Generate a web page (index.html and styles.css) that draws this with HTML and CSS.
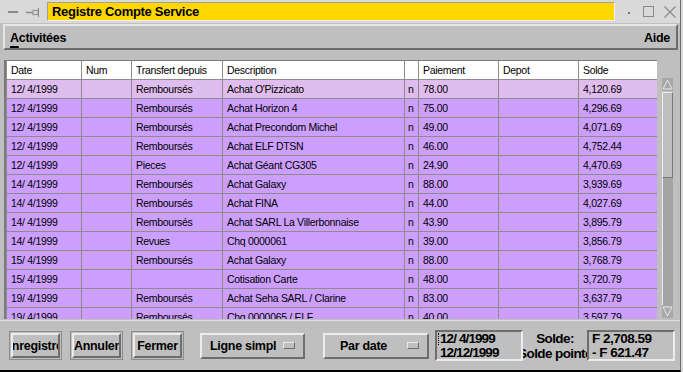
FILE: index.html
```html
<!DOCTYPE html>
<html lang="fr">
<head>
    <meta charset="UTF-8">
    <title>Registre Compte Service</title>
    <link rel="stylesheet" href="styles.css">
</head>
<body>
    <div class="window">
        <div class="titlebar">
            <span class="tb-minus"></span>
            <svg class="tb-pin" width="15" height="10" viewBox="0 0 15 10">
                <path d="M0 5.5H7" stroke="#8a8a8a" stroke-width="1.5"/>
                <path d="M7 2.5V8.5M8 3.5H12V7.5H8" fill="none" stroke="#8a8a8a" stroke-width="1"/>
                <path d="M12.5 1V10" stroke="#8a8a8a" stroke-width="1"/>
            </svg>
            <div class="title-field">Registre Compte Service</div>
            <span class="tb-dot"></span>
            <span class="tb-max"></span>
            <svg class="tb-close" width="12" height="12" viewBox="0 0 12 12">
                <path d="M0.5 0.5L11.5 11.5M11.5 0.5L0.5 11.5" stroke="#8a8a8a" stroke-width="1.2"/>
            </svg>
        </div>

        <div class="menubar">
            <span class="menu-item"><u>A</u>ctivitées</span>
            <span class="menu-item">Aide</span>
        </div>

        <div class="content">
            <div class="register">
                <div class="grid">
                    <table class="ledger">
                        <colgroup>
                            <col class="c-date"><col class="c-num"><col class="c-from"><col class="c-desc">
                            <col class="c-flag"><col class="c-pay"><col class="c-dep"><col class="c-bal">
                        </colgroup>
                        <thead>
                            <tr><th>Date</th><th>Num</th><th>Transfert depuis</th><th>Description</th><th></th><th>Paiement</th><th>Depot</th><th>Solde</th></tr>
                        </thead>
                        <tbody id="rows"></tbody>
                    </table>
                </div>
                <div class="scrollbar">
                    <div class="sb-arrow sb-up"><svg width="11" height="11" viewBox="0 0 11 11"><path d="M5.5 1L1 10H10Z" fill="none" stroke="#e8e8e8"/></svg></div>
                    <div class="sb-slider"></div>
                    <div class="sb-trough"></div>
                    <div class="sb-arrow sb-down"><svg width="11" height="11" viewBox="0 0 11 11"><path d="M5.5 10L1 1H10Z" fill="none" stroke="#e8e8e8"/></svg></div>
                </div>
            </div>
        </div>

        <div class="toolbar">
            <div class="btn-frame"><div class="btn"><span>Enregistrer</span></div></div>
            <div class="btn-frame"><div class="btn"><span>Annuler</span></div></div>
            <div class="btn-frame"><div class="btn"><span>Fermer</span></div></div>
            <div class="optmenu opt-style">Ligne simpl<span class="opt-ind"></span></div>
            <div class="optmenu opt-sort">Par date<span class="opt-ind"></span></div>
            <div class="field dates">
                <span class="cursor"></span>
                <div>12/ 4/1999</div>
                <div>12/12/1999</div>
            </div>
            <div class="labels">
                <div><span>Solde:</span></div>
                <div><span>Solde pointé</span></div>
            </div>
            <div class="field amounts">
                <div>F 2,708.59</div>
                <div>- F 621.47</div>
            </div>
        </div>
    </div>

    <script src="app.js"></script>
</body>
</html>
```

FILE: app.js
```js
const entries = [
    { date: '12/ 4/1999', from: 'Remboursés', desc: "Achat O'Pizzicato", pay: '78.00', bal: '4,120.69' },
    { date: '12/ 4/1999', from: 'Remboursés', desc: 'Achat Horizon 4', pay: '75.00', bal: '4,296.69' },
    { date: '12/ 4/1999', from: 'Remboursés', desc: 'Achat Precondom Michel', pay: '49.00', bal: '4,071.69' },
    { date: '12/ 4/1999', from: 'Remboursés', desc: 'Achat ELF DTSN', pay: '46.00', bal: '4,752.44' },
    { date: '12/ 4/1999', from: 'Pieces', desc: 'Achat Géant CG305', pay: '24.90', bal: '4,470.69' },
    { date: '14/ 4/1999', from: 'Remboursés', desc: 'Achat Galaxy', pay: '88.00', bal: '3,939.69' },
    { date: '14/ 4/1999', from: 'Remboursés', desc: 'Achat FINA', pay: '44.00', bal: '4,027.69' },
    { date: '14/ 4/1999', from: 'Remboursés', desc: 'Achat SARL La Villerbonnaise', pay: '43.90', bal: '3,895.79' },
    { date: '14/ 4/1999', from: 'Revues', desc: 'Chq 0000061', pay: '39.00', bal: '3,856.79' },
    { date: '15/ 4/1999', from: 'Remboursés', desc: 'Achat Galaxy', pay: '88.00', bal: '3,768.79' },
    { date: '15/ 4/1999', from: '', desc: 'Cotisation Carte', pay: '48.00', bal: '3,720.79' },
    { date: '19/ 4/1999', from: 'Remboursés', desc: 'Achat Seha SARL / Clarine', pay: '83.00', bal: '3,637.79' },
    { date: '19/ 4/1999', from: 'Remboursés', desc: 'Chq 0000065 / ELF', pay: '40.00', bal: '3,597.79' }
];

const tbody = document.getElementById('rows');

entries.forEach((e, i) => {
    const tr = document.createElement('tr');
    if (i === 0) tr.className = 'current';
    const cells = [e.date, '', e.from, e.desc, 'n', e.pay, '', e.bal];
    cells.forEach((text, k) => {
        const td = document.createElement('td');
        td.textContent = text;
        if (k === 4) td.className = 'flag';
        tr.appendChild(td);
    });
    tbody.appendChild(tr);
});
```

FILE: styles.css
```css
body {
    margin: 0;
    background: #d9d9d9;
    font-family: "Liberation Sans", Arial, sans-serif;
    color: #000;
}
.window {
    width: 680px;
    height: 370px;
    border-right: 1px solid #6e6e6e;
    border-bottom: 2px solid #000;
    background: #bfbfbf;
    overflow: hidden;
}

/* title bar */
.titlebar {
    height: 23px;
    display: flex;
    align-items: center;
    background: #d9d9d9;
}
.tb-minus {
    width: 10px;
    height: 2px;
    margin-left: 8px;
    background: #8a8a8a;
}
.tb-pin {
    margin-left: 8px;
}
.title-field {
    margin-left: 6px;
    width: 562px;
    height: 17px;
    line-height: 17px;
    padding-left: 4px;
    background: #ffd700;
    border: 1px solid;
    border-color: #a0a0a0 #f4f4f4 #f4f4f4 #a0a0a0;
    font-weight: bold;
    font-size: 13px;
    letter-spacing: -0.3px;
}
.tb-dot {
    width: 2px;
    height: 2px;
    margin-left: 13px;
    margin-top: 2px;
    background: #707070;
}
.tb-max {
    width: 9px;
    height: 9px;
    margin-left: 13px;
    border: 1px solid #8a8a8a;
}
.tb-close {
    margin-left: 10px;
}

/* menu bar */
.menubar {
    height: 22px;
    margin: 1px 2px 0 3px;
    display: flex;
    justify-content: space-between;
    align-items: center;
    padding: 0 6px 0 5px;
    background: #bfbfbf;
    border: 2px solid;
    border-color: #e6e6e6 #6e6e6e #6e6e6e #e6e6e6;
}
.menu-item {
    font-weight: bold;
    font-size: 12.5px;
    letter-spacing: -0.3px;
    margin-top: 1px;
}
.menu-item u {
    text-decoration-thickness: 2px;
    text-underline-offset: 4px;
}

/* register */
.content {
    padding: 10px 0 0 4px;
}
.register {
    height: 260px;
    display: flex;
}
.grid {
    width: 652px;
    height: 258px;
    overflow: hidden;
    border-left: 2px solid #7a7a7a;
    border-top: 1px solid #7a7a7a;
    background: #bfbfbf;
}
.ledger {
    border-collapse: collapse;
    table-layout: fixed;
    width: 652px;
    font-size: 10.5px;
    letter-spacing: -0.3px;
}
.c-date { width: 75px; }
.c-num { width: 50px; }
.c-from { width: 91px; }
.c-desc { width: 182px; }
.c-flag { width: 14px; }
.c-pay { width: 80px; }
.c-dep { width: 80px; }
.c-bal { width: 80px; }
.ledger th,
.ledger td {
    height: 18px;
    padding: 0 0 0 4px;
    border: 1px solid #8c8c8c;
    text-align: left;
    font-weight: normal;
    white-space: pre;
    overflow: hidden;
}
.ledger th {
    background: #fff;
    border-top: none;
}
.ledger td {
    background: #cc9fff;
}
.ledger tr.current td {
    background: #dfbdee;
}
.ledger td.flag {
    padding-left: 3px;
}

/* scrollbar */
.scrollbar {
    width: 18px;
    margin-left: 2px;
    display: flex;
    flex-direction: column;
    padding: 18px 0 2px 3px;
    background: #bfbfbf;
}
.sb-arrow {
    width: 11px;
    height: 13px;
    display: flex;
    align-items: center;
    justify-content: center;
    background: #a8a8a8;
}
.sb-slider {
    width: 9px;
    height: 84px;
    margin-top: 1px;
    background: #bfbfbf;
    border: 1px solid;
    border-color: #ececec #7a7a7a #7a7a7a #ececec;
}
.sb-trough {
    flex: 1;
    width: 11px;
    background: #a3a3a3;
    border-left: 1px solid #ececec;
    box-sizing: border-box;
}

/* bottom bar */
.toolbar {
    height: 49px;
    border-top: 1px solid #e0e0e0;
    display: flex;
    align-items: center;
    padding: 0 0 2px 9px;
    font-weight: bold;
}
.btn-frame {
    width: 49px;
    height: 25px;
    margin-right: 8px;
    padding: 1px;
    border: 1px solid #8c8c8c;
}
.btn-frame:nth-child(3) {
    margin-right: 16px;
}
.btn {
    height: 25px;
    display: flex;
    justify-content: center;
    align-items: center;
    overflow: hidden;
    border: 2px solid;
    border-color: #ececec #6e6e6e #6e6e6e #ececec;
    font-size: 12.5px;
    letter-spacing: -0.3px;
    box-sizing: border-box;
}
.btn span {
    flex: none;
}
.optmenu {
    height: 26px;
    display: flex;
    align-items: center;
    box-sizing: border-box;
    border: 2px solid;
    border-color: #ececec #6e6e6e #6e6e6e #ececec;
    font-size: 12.5px;
    letter-spacing: -0.3px;
}
.opt-style {
    width: 105px;
    padding-left: 8px;
    margin-right: 18px;
}
.opt-sort {
    width: 106px;
    padding-left: 15px;
    margin-right: 6px;
}
.opt-ind {
    width: 10px;
    height: 5px;
    margin-left: auto;
    margin-right: 8px;
    border: 1px solid;
    border-color: #ececec #6e6e6e #6e6e6e #ececec;
}
.field {
    width: 88px;
    height: 31px;
    box-sizing: border-box;
    border: 2px solid;
    border-color: #6e6e6e #ececec #ececec #6e6e6e;
    padding: 0 0 0 3px;
    font-size: 13.5px;
    line-height: 14px;
    display: flex;
    flex-direction: column;
    justify-content: center;
}
.dates {
    position: relative;
    letter-spacing: -0.9px;
}
.cursor {
    position: absolute;
    left: 1px;
    top: 1px;
    width: 1px;
    height: 12px;
    border-left: 1px dotted #000;
}
.labels {
    width: 64px;
    font-size: 13.5px;
    line-height: 15px;
    letter-spacing: -0.6px;
    overflow: hidden;
}
.labels div {
    display: flex;
    justify-content: center;
}
.labels span {
    flex: none;
}
.amounts {
    letter-spacing: -0.5px;
    padding-left: 3px;
}
```
